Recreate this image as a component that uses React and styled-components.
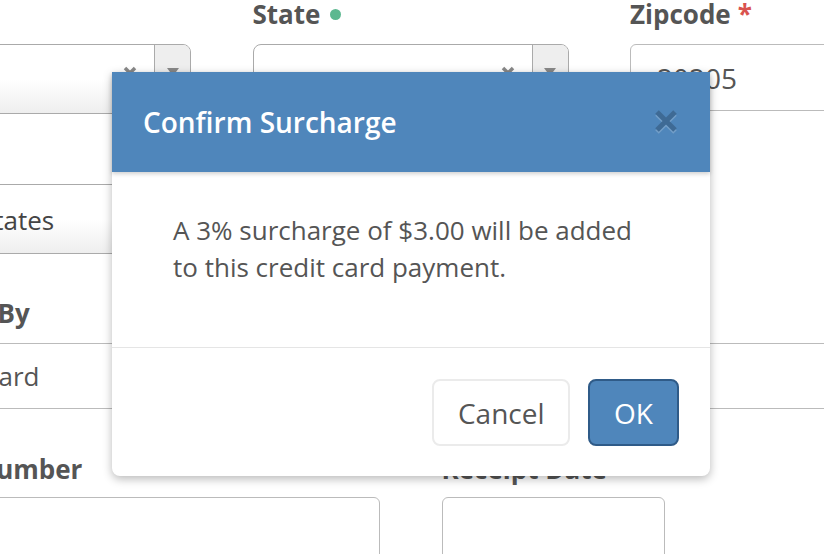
import React from "react";
import styled, { createGlobalStyle } from "styled-components";

const GlobalStyle = createGlobalStyle`
  html, body {
    margin: 0;
    padding: 0;
    background: #fff;
    overflow: hidden;
  }
  body {
    font-family: "Open Sans", "Liberation Sans", sans-serif;
    color: #555;
  }
`;

const Page = styled.div`
  position: relative;
  width: 824px;
  height: 554px;
  overflow: hidden;
`;

const Form = styled.div`
  margin: -4px 0 0 -125px;
  width: 1100px;
`;

const Row = styled.div`
  display: grid;
  grid-template-columns: ${(p) => p.$cols};
  column-gap: 61.5px;
  margin-bottom: ${(p) => p.$mb}px;
`;

const Field = styled.div`
  display: flex;
  flex-direction: column;
  min-width: 0;
`;

const Label = styled.label`
  display: flex;
  align-items: center;
  gap: ${(p) => p.$gap || 8}px;
  height: 37px;
  margin-top: ${(p) => p.$shift || 0}px;
  margin-bottom: ${(p) => 11 - (p.$shift || 0)}px;
  font-size: 26px;
  line-height: 37px;
  font-weight: 700;
  color: #555;
  white-space: nowrap;
`;

const Dot = styled.span`
  width: 11px;
  height: 11px;
  border-radius: 50%;
  background: #5cb890;
`;

const Required = styled.span`
  color: #d9534f;
  font-weight: 700;
`;

const Select = styled.div`
  display: flex;
  height: 70px;
  box-sizing: border-box;
  border: 1px solid #aaa;
  border-radius: 8px;
  background: linear-gradient(to top, #eee 0%, #fff 50%);
  overflow: hidden;
`;

const SelectValue = styled.span`
  flex: 1;
  padding-left: 16px;
  font-size: 26px;
  line-height: 70px;
  color: #444;
  white-space: nowrap;
`;

const Clear = styled.svg`
  margin: 21px 17px 0 0;
  flex: none;
`;

const Arrow = styled.div`
  width: 36px;
  flex: none;
  border-left: 1px solid #aaa;
  background: #eee;
  display: flex;
  justify-content: center;
  padding-top: 23px;
  box-sizing: border-box;
`;

const Input = styled.input`
  height: ${(p) => p.$h || 66}px;
  box-sizing: border-box;
  border: 1px solid #bbb;
  border-radius: 6px;
  padding: 0 26px;
  font-family: "Open Sans", "Liberation Sans", sans-serif;
  font-size: ${(p) => p.$fs || 28}px;
  color: #555;
  background: #fff;
  outline: none;
  width: 100%;
`;

const Modal = styled.div`
  position: absolute;
  left: 112px;
  top: 72px;
  width: 598px;
  background: #fff;
  border-radius: 0 0 8px 8px;
  box-shadow: 0 3px 10px rgba(0, 0, 0, 0.28);
`;

const Header = styled.div`
  position: relative;
  z-index: 1;
  height: 100px;
  background: #4f86bb;
  display: flex;
  align-items: center;
  justify-content: space-between;
  padding: 0 33px 0 31px;
  box-shadow: 0 2px 4px rgba(0, 0, 0, 0.18);
`;

const Title = styled.h4`
  margin: 0;
  font-size: 28px;
  font-weight: 600;
  color: #fff;
  line-height: 1;
`;

const Body = styled.div`
  height: 175px;
  box-sizing: border-box;
  padding: 40px 60px 0 61px;
  font-size: 26px;
  line-height: 37px;
  color: #555;
`;

const Footer = styled.div`
  border-top: 1px solid #e5e5e5;
  display: flex;
  justify-content: flex-end;
  gap: 18px;
  padding: 31px 31px 30px;
`;

const Button = styled.button`
  height: 67px;
  padding: 0 ${(p) => (p.$primary ? 24 : 23.5)}px;
  border-radius: 8px;
  border: 2px solid ${(p) => (p.$primary ? "#2f5b88" : "#ebebeb")};
  background: ${(p) => (p.$primary ? "#4f86bb" : "#fff")};
  color: ${(p) => (p.$primary ? "#fff" : "#555")};
  font-family: "Open Sans", "Liberation Sans", sans-serif;
  font-size: 28px;
  cursor: pointer;
`;

function ClearIcon() {
  return (
    <Clear width="14" height="14" viewBox="0 0 14 14">
      <path d="M2 2 L12 12 M12 2 L2 12" stroke="#888" strokeWidth="3.5" />
    </Clear>
  );
}

function ArrowDown() {
  return (
    <svg width="12" height="8" viewBox="0 0 12 8">
      <path d="M0 0 H12 L6 8 Z" fill="#888" />
    </svg>
  );
}

function CloseIcon() {
  return (
    <svg width="22" height="24" viewBox="0 0 22 24" style={{ cursor: "pointer" }}>
      <g opacity="0.2" strokeWidth="5">
        <path d="M2 4 L20 22 M20 4 L2 22" stroke="#fff" />
        <path d="M2 2 L20 20 M20 2 L2 20" stroke="#000" />
      </g>
    </svg>
  );
}

function SelectBox({ value }) {
  return (
    <Select>
      <SelectValue>{value}</SelectValue>
      <ClearIcon />
      <Arrow>
        <ArrowDown />
      </Arrow>
    </Select>
  );
}

export default function App() {
  return (
    <Page>
      <GlobalStyle />
      <Form>
        <Row $cols="316px 316px 316px" $mb={22}>
          <Field>
            <Label>City</Label>
            <SelectBox value="Dallas" />
          </Field>
          <Field>
            <Label $gap={10}>
              State <Dot />
            </Label>
            <SelectBox value="Texas" />
          </Field>
          <Field>
            <Label $gap={7}>
              Zipcode <Required>*</Required>
            </Label>
            <Input $h={67} readOnly value="20205" />
          </Field>
        </Row>

        <Row $cols="316px 316px 316px" $mb={41}>
          <Field>
            <Label>Country</Label>
            <Select>
              <SelectValue>United States</SelectValue>
            </Select>
          </Field>
          <Field>
            <Label>Phone</Label>
            <Input readOnly value="" />
          </Field>
          <Field />
        </Row>

        <Row $cols="316px 316px 316px" $mb={40}>
          <Field>
            <Label>Received By</Label>
            <Input $fs={26} readOnly value="Credit Card" />
          </Field>
          <Field>
            <Label>Amount</Label>
            <Input readOnly value="$100.00" />
          </Field>
          <Field>
            <Label>&nbsp;</Label>
            <Input readOnly value="" />
          </Field>
        </Row>

        <Row $cols="505px 223px 223px" $mb={0}>
          <Field>
            <Label $shift={2}>Invoice Number</Label>
            <Input readOnly value="" />
          </Field>
          <Field>
            <Label $shift={2}>Receipt Date</Label>
            <Input readOnly value="" />
          </Field>
        </Row>
      </Form>

      <Modal role="dialog">
        <Header>
          <Title>Confirm Surcharge</Title>
          <CloseIcon />
        </Header>
        <Body>
          A 3% surcharge of $3.00 will be added
          <br />
          to this credit card payment.
        </Body>
        <Footer>
          <Button>Cancel</Button>
          <Button $primary>OK</Button>
        </Footer>
      </Modal>
    </Page>
  );
}
